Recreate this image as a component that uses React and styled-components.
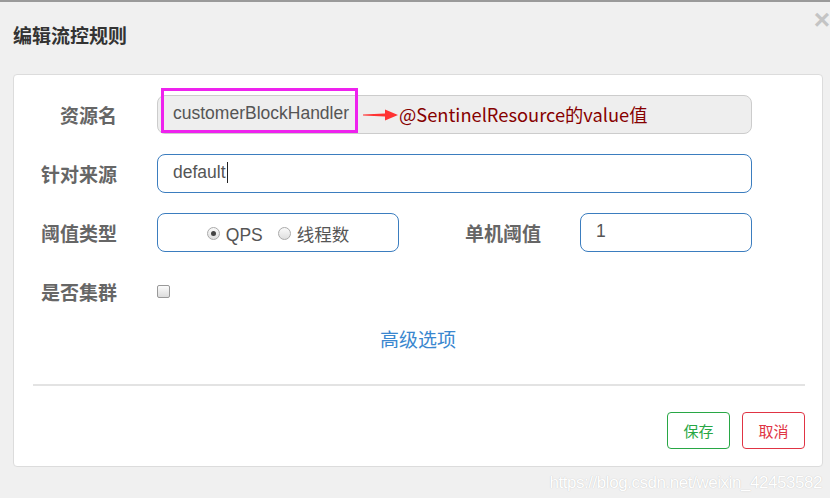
import React from "react";
import styled, { createGlobalStyle } from "styled-components";

const GlobalStyle = createGlobalStyle`
  html, body {
    margin: 0;
    padding: 0;
    background: #f0f0f0;
  }
  body {
    font-family: "Liberation Sans", "Noto Sans CJK SC", sans-serif;
  }
`;

function App() {
  return (
    <>
      <GlobalStyle />
      <Page>
        <Close>×</Close>
        <Header>
          <Title>编辑流控规则</Title>
        </Header>
        <Card>
          <Form>
            <Label>资源名</Label>
            <Field disabled>
              customerBlockHandler
              <Highlight />
              <Arrow width="36" height="12" viewBox="0 0 36 12">
                <polygon points="0,5.4 22,4.6 22,0.5 35,6 22,11.5 22,7.4 0,6.6" fill="#ff3333" />
              </Arrow>
              <Note>@SentinelResource的value值</Note>
            </Field>

            <Label>针对来源</Label>
            <Field>
              default
              <Caret />
            </Field>

            <Label>阈值类型</Label>
            <SplitRow>
              <RadioBox>
                <RadioItem>
                  <Radio checked />
                  QPS
                </RadioItem>
                <RadioItem>
                  <Radio />
                  线程数
                </RadioItem>
              </RadioBox>
              <Label>单机阈值</Label>
              <Field>1</Field>
            </SplitRow>

            <Label>是否集群</Label>
            <CheckRow>
              <Checkbox />
            </CheckRow>
          </Form>
          <MoreLink>高级选项</MoreLink>
          <Divider />
          <Footer>
            <Button tone="#28a745">保存</Button>
            <Button tone="#e03444">取消</Button>
          </Footer>
        </Card>
        <Watermark>https://blog.csdn.net/weixin_42453582</Watermark>
      </Page>
    </>
  );
}

const Page = styled.div`
  position: relative;
  width: 830px;
  height: 498px;
  box-sizing: border-box;
  border-top: 2px solid #9a9a9a;
  background: #f0f0f0;
  overflow: hidden;
`;

const Close = styled.div`
  position: absolute;
  right: 0px;
  top: 3px;
  font-family: "Liberation Sans", sans-serif;
  font-size: 28px;
  font-weight: bold;
  color: #c4c4c4;
  line-height: 30px;
`;

const Header = styled.div`
  height: 72px;
  box-sizing: border-box;
  padding: 21px 13px 0;
`;

const Title = styled.div`
  font-family: "Noto Sans CJK SC", sans-serif;
  font-size: 19px;
  font-weight: bold;
  line-height: 24px;
  color: #333;
`;

const Card = styled.div`
  margin-left: 13px;
  width: 810px;
  height: 393px;
  box-sizing: border-box;
  background: #fff;
  border: 1px solid #dcdcdc;
  border-radius: 4px;
`;

const Form = styled.div`
  display: grid;
  grid-template-columns: 103px 595px;
  grid-auto-rows: 39px;
  column-gap: 40px;
  row-gap: 20px;
  padding-top: 20px;
  align-items: center;
`;

const Label = styled.div`
  text-align: right;
  font-family: "Noto Sans CJK SC", sans-serif;
  font-size: 19px;
  font-weight: bold;
  color: #666;
  line-height: 39px;
`;

const Field = styled.div`
  position: relative;
  height: 39px;
  box-sizing: border-box;
  padding-left: 15px;
  display: flex;
  align-items: center;
  font-family: "Liberation Sans", sans-serif;
  font-size: 17.5px;
  color: #555;
  background: ${(p) => (p.disabled ? "#eee" : "#fff")};
  border: 1px solid ${(p) => (p.disabled ? "#ccc" : "#3b7dbf")};
  border-radius: 8px;
  padding-bottom: 2px;
`;

const Highlight = styled.div`
  position: absolute;
  left: 3px;
  top: -8px;
  width: 197px;
  height: 45px;
  box-sizing: border-box;
  border: 3px solid #ee22ee;
`;

const Arrow = styled.svg`
  position: absolute;
  left: 205px;
  top: 13px;
`;

const Note = styled.span`
  position: absolute;
  left: 241px;
  top: 4px;
  font-family: "Noto Sans CJK SC", sans-serif;
  font-size: 18.3px;
  line-height: 28px;
  color: #860000;
  white-space: nowrap;
`;

const Caret = styled.span`
  display: inline-block;
  width: 1px;
  height: 21px;
  margin-left: 1px;
  background: #222;
`;

const SplitRow = styled.div`
  display: grid;
  grid-template-columns: 242px 142px 1fr;
  align-items: center;

  & > :last-child {
    margin-left: 39px;
  }
`;

const RadioBox = styled.div`
  height: 39px;
  box-sizing: border-box;
  border: 1px solid #3b7dbf;
  border-radius: 8px;
  display: flex;
  align-items: center;
  justify-content: center;
  gap: 15px;
  padding-top: 4px;
  font-family: "Liberation Sans", "Noto Sans CJK SC", sans-serif;
  font-size: 17.5px;
  color: #555;
`;

const RadioItem = styled.div`
  display: flex;
  align-items: center;
  gap: 6px;
  line-height: 24px;
`;

const Radio = styled.span`
  position: relative;
  width: 13px;
  height: 13px;
  box-sizing: border-box;
  border-radius: 50%;
  border: 1px solid #aaa;
  background: linear-gradient(#fafafa, #dedede);
  margin-top: -2px;

  &::after {
    content: "";
    display: ${(p) => (p.checked ? "block" : "none")};
    position: absolute;
    left: 3px;
    top: 3px;
    width: 5px;
    height: 5px;
    border-radius: 50%;
    background: #444;
  }
`;

const CheckRow = styled.div`
  display: flex;
  align-items: center;
  height: 39px;
`;

const Checkbox = styled.span`
  width: 13px;
  height: 13px;
  box-sizing: border-box;
  border: 1px solid #999;
  border-radius: 2px;
  background: linear-gradient(#fbfbfb, #dcdcdc);
`;

const MoreLink = styled.div`
  margin-top: 14px;
  text-align: center;
  font-family: "Noto Sans CJK SC", sans-serif;
  font-size: 19px;
  line-height: 28px;
  color: #3a87cf;
`;

const Divider = styled.div`
  margin: 31px 17px 0 19px;
  height: 2px;
  background: #e3e3e3;
`;

const Footer = styled.div`
  display: flex;
  justify-content: flex-end;
  gap: 12px;
  padding-right: 17px;
  margin-top: 26px;
`;

const Button = styled.div`
  width: 63px;
  height: 37px;
  box-sizing: border-box;
  border: 1px solid ${(p) => p.tone};
  border-radius: 4px;
  color: ${(p) => p.tone};
  display: flex;
  align-items: center;
  justify-content: center;
  font-family: "Noto Sans CJK SC", sans-serif;
  font-size: 15px;
`;

const Watermark = styled.div`
  position: absolute;
  right: 8px;
  bottom: 5px;
  font-family: "Liberation Sans", sans-serif;
  font-size: 17px;
  letter-spacing: -0.45px;
  color: #fff;
  text-shadow: 0 0 1px #bbb;
`;

export default App;
